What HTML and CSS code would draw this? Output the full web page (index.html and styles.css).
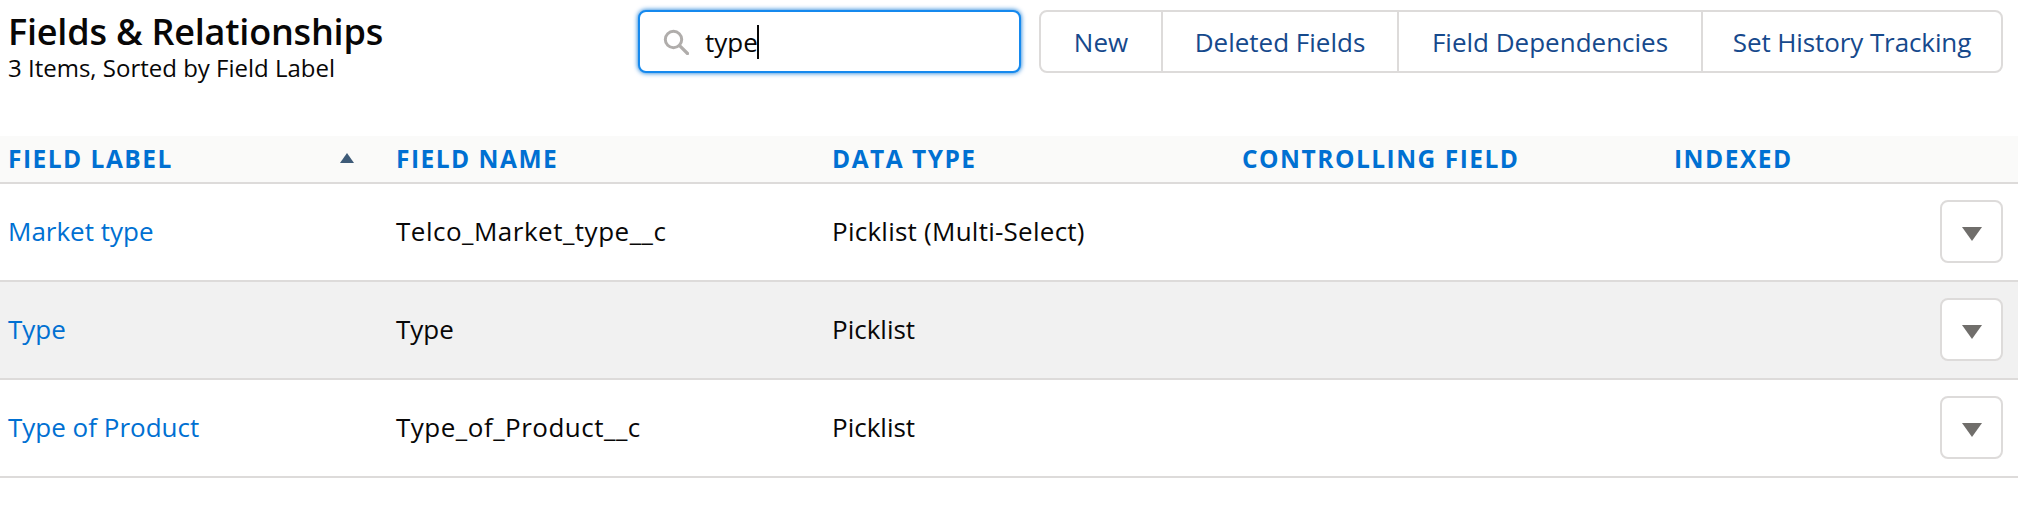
FILE: index.html
```html
<!DOCTYPE html>
<html lang="en">
<head>
<meta charset="utf-8">
<title>Fields &amp; Relationships</title>
<link rel="stylesheet" href="styles.css">
</head>
<body>
<header class="topbar">
  <div class="heading">
    <h1 class="title">Fields &amp; Relationships</h1>
    <p class="subtitle">3 Items, Sorted by Field Label</p>
  </div>
  <div class="search">
    <svg class="search-icon" viewBox="0 0 26 26" width="26" height="26" aria-hidden="true"><circle cx="10.5" cy="10.5" r="8.2" fill="none" stroke="#b0adab" stroke-width="3"/><path d="M16.6 16.6 L24.5 24.5" stroke="#b0adab" stroke-width="3.2" stroke-linecap="round"/></svg>
    <span class="search-text">type</span><span class="caret"></span>
  </div>
  <div class="btn-group">
    <button class="btn btn-new">New</button>
    <button class="btn btn-deleted">Deleted Fields</button>
    <button class="btn btn-deps">Field Dependencies</button>
    <button class="btn btn-history">Set History Tracking</button>
  </div>
</header>
<main class="table">
  <div class="row head">
    <div class="cell first">FIELD LABEL<svg class="sort" viewBox="0 0 14 10" width="14" height="10" aria-hidden="true"><path d="M7 0 L14 10 L0 10 Z" fill="#3e5b78"/></svg></div>
    <div class="cell">FIELD NAME</div>
    <div class="cell">DATA TYPE</div>
    <div class="cell">CONTROLLING FIELD</div>
    <div class="cell">INDEXED</div>
  </div>
  <div class="row">
    <div class="cell first link">Market type</div>
    <div class="cell api">Telco_Market_type__c</div>
    <div class="cell multi">Picklist (Multi-Select)</div>
    <div class="cell"></div>
    <div class="cell action"><button class="menu-btn"><svg viewBox="0 0 20 14" width="20" height="14" aria-hidden="true"><path d="M0 0 H20 L10 14 Z" fill="#706e6b"/></svg></button></div>
  </div>
  <div class="row hover">
    <div class="cell first link">Type</div>
    <div class="cell">Type</div>
    <div class="cell">Picklist</div>
    <div class="cell"></div>
    <div class="cell action"><button class="menu-btn"><svg viewBox="0 0 20 14" width="20" height="14" aria-hidden="true"><path d="M0 0 H20 L10 14 Z" fill="#706e6b"/></svg></button></div>
  </div>
  <div class="row">
    <div class="cell first link">Type of Product</div>
    <div class="cell api">Type_of_Product__c</div>
    <div class="cell">Picklist</div>
    <div class="cell"></div>
    <div class="cell action"><button class="menu-btn"><svg viewBox="0 0 20 14" width="20" height="14" aria-hidden="true"><path d="M0 0 H20 L10 14 Z" fill="#706e6b"/></svg></button></div>
  </div>
</main>
</body>
</html>
```
FILE: styles.css
```css
* { box-sizing: border-box; }
html, body { margin: 0; padding: 0; background: #fff; }
body { font-family: "Open Sans", "Noto Sans", sans-serif; color: #080707; width: 2018px; height: 516px; overflow: hidden; }

.topbar { display: flex; align-items: flex-start; height: 136px; padding: 10px 15px 0 8px; }
.heading { width: 630px; }
.title { margin: 1px 0 0; font-size: 36px; line-height: 42px; font-weight: 600; letter-spacing: -0.2px; }
.subtitle { margin: 0; font-size: 24px; line-height: 30px; }

.search { width: 383px; height: 63px; display: flex; align-items: center; padding-left: 23px; border: 2px solid #1589ee; border-radius: 8px; box-shadow: 0 0 5px #0070d2; background: #fff; font-size: 26px; }
.search-icon { flex: none; margin-right: 16px; }
.caret { width: 2px; height: 34px; background: #080707; margin-left: -1px; }

.btn-group { display: flex; height: 63px; margin-left: 18px; border: 2px solid #dddbda; border-radius: 8px; background: #fff; }
.btn { border: 0; border-left: 2px solid #dddbda; background: transparent; color: #16498c; font: inherit; font-size: 26px; padding: 0; }
.btn:first-child { border-left: 0; }
.btn-new { width: 120px; }
.btn-deleted { width: 236px; }
.btn-deps { width: 304px; }
.btn-history { width: 300px; letter-spacing: -0.1px; }

.table { width: 100%; }
.row { display: grid; grid-template-columns: 396px 436px 410px 432px 1fr; align-items: center; height: 98px; border-bottom: 2px solid #dddbda; font-size: 26px; }
.row.head { height: 48px; background: #fafaf9; color: #0070d2; font-size: 24.5px; font-weight: 700; letter-spacing: 1.5px; border-bottom-width: 2px; }
.row.hover { background: #f1f1f1; }
.cell { min-width: 0; white-space: nowrap; padding-bottom: 2px; }
.api { letter-spacing: 0.5px; }
.multi { letter-spacing: 0.25px; }
.first { padding-left: 8px; position: relative; }
.link { color: #0070d2; }
.sort { position: absolute; left: 340px; top: 50%; margin-top: -6px; }
.action { display: flex; justify-content: flex-end; padding-right: 15px; padding-bottom: 1px; }
.menu-btn { width: 63px; height: 63px; padding: 4px 0 0; display: flex; align-items: center; justify-content: center; border: 2px solid #dddbda; border-radius: 8px; background: #fff; }
```
